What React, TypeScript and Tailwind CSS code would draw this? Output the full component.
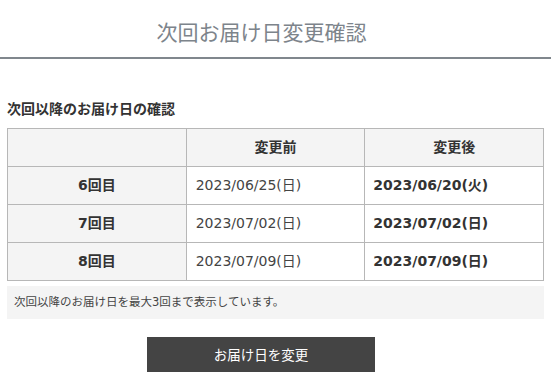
import React from "react";

const rows = [
  { label: "6回目", before: "2023/06/25(日)", after: "2023/06/20(火)" },
  { label: "7回目", before: "2023/07/02(日)", after: "2023/07/02(日)" },
  { label: "8回目", before: "2023/07/09(日)", after: "2023/07/09(日)" },
];

const App = () => {
  return (
    <div className="w-[551px] h-[382px] bg-white text-[#333] font-['DejaVu_Sans','Noto_Sans_CJK_JP',sans-serif]">
      <h1 className="h-[59px] flex items-center justify-center text-[21px] text-[#7d848b] border-b-2 border-[#80878d] pt-[7px] pr-[28px] font-['Noto_Sans_CJK_JP',sans-serif]">
        次回お届け日変更確認
      </h1>
      <div className="px-[7px] pt-[40px]">
        <h2 className="text-[14px] font-bold leading-[20px] mb-[9px]">次回以降のお届け日の確認</h2>
        <table className="w-full border-collapse table-fixed text-[14px]">
          <thead>
            <tr className="h-[38px] bg-[#f4f4f4]">
              <th className="border border-[#b7b7b7]"></th>
              <th className="border border-[#b7b7b7] font-bold">変更前</th>
              <th className="border border-[#b7b7b7] font-bold">変更後</th>
            </tr>
          </thead>
          <tbody>
            {rows.map((r) => (
              <tr key={r.label} className="h-[38px]">
                <td className="border border-[#b7b7b7] bg-[#f4f4f4] text-center font-bold">{r.label}</td>
                <td className="border border-[#b7b7b7] px-[9px] text-[#444]">{r.before}</td>
                <td className="border border-[#b7b7b7] px-[8px] font-bold">{r.after}</td>
              </tr>
            ))}
          </tbody>
        </table>
        <div className="mt-[5px] h-[33px] bg-[#f4f4f4] flex items-center px-[7px] text-[11.5px] text-[#444]">
          次回以降のお届け日を最大3回まで表示しています。
        </div>
        <div className="mt-[18px] ml-[140px]">
          <button className="w-[228px] h-[35px] bg-[#444] text-white text-[13.5px] font-['Noto_Sans_CJK_JP',sans-serif]">お届け日を変更</button>
        </div>
      </div>
    </div>
  );
};

export default App;
